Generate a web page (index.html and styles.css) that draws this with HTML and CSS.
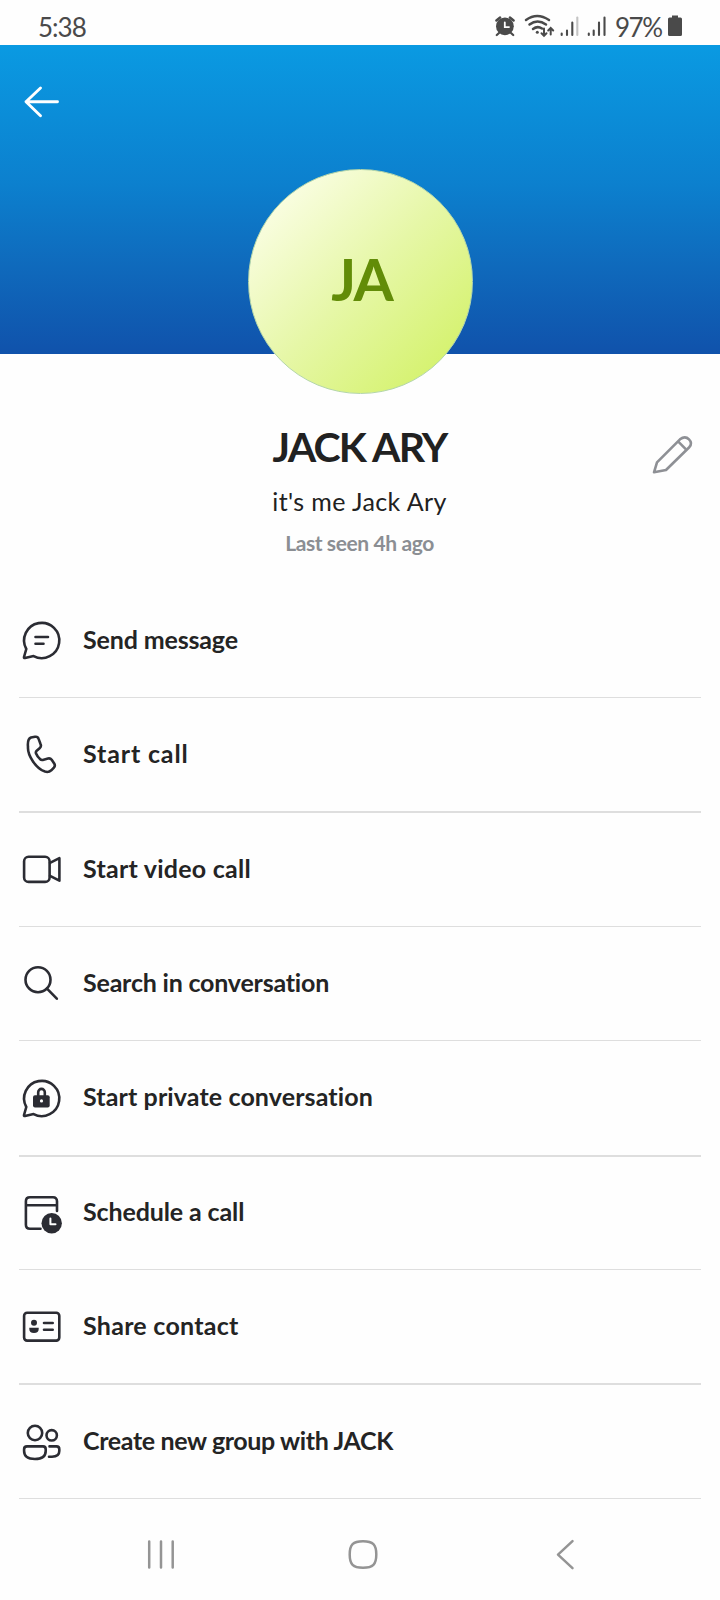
FILE: index.html
```html
<!DOCTYPE html>
<html lang="en">
<head>
<meta charset="utf-8">
<title>Contact profile</title>
<link rel="stylesheet" href="styles.css">
</head>
<body>
<div class="screen">
  <header class="status">
    <span class="status-time">5:38</span>
    <div class="status-right">
      <svg class="status-icons" width="112" height="26" viewBox="494 14 112 26">
        <g fill="#4a4a4a" stroke="#4a4a4a" stroke-linecap="round">
          <circle cx="504.9" cy="26.3" r="8.9" stroke="none"/>
          <path d="M499 33l-2.2 2M511 33l2.2 2" stroke-width="2.2"/>
          <path d="M496.4 20.5l3.7-3M513.6 20.5l-3.7-3" stroke-width="2.4"/>
          <path d="M504.8 22.3v4.8h4.2" fill="none" stroke="#fff" stroke-width="1.8"/>
          <path d="M526 20Q537 12 549 20M529.500 24.500Q537.500 18.500 546 24.500M533 29Q537.500 25.500 542 28.500" fill="none" stroke-width="2.5"/>
          <circle cx="537.3" cy="32.3" r="1.5" stroke="none"/>
          <path d="M544 28.500v7M541.500 33.300l2.500 2.500 2.500-2.500M550.700 34.500v-6.500M548.200 30.500l2.500-2.500 2.500 2.500" fill="none" stroke-width="2"/>
          <path d="M561.700 33.500v1.500M567 30.500v4.500M572.300 22.500v12.500M588.800 33.500v1.500M593.700 30.500v4.500M599 22.500v12.500M604.500 17.500v17.500" stroke-width="2.1"/>
          <path d="M577.300 17.500v17.500" stroke="#c4c4c4" stroke-width="2.100"/>
        </g>
      </svg>
      <span class="status-battery">97%</span>
      <svg class="battery" width="14" height="22" viewBox="0 0 14 22"><path d="M4 .500h6v2h2.500q1.500 0 1.500 1.500v15.500q0 1.500-1.500 1.500h-11q-1.500 0-1.500-1.500v-15.500q0-1.500 1.500-1.500h2.500z" fill="#4a4a4a"/></svg>
    </div>
  </header>

  <section class="banner">
    <svg class="back" width="36" height="34" viewBox="0 0 36 34"><path d="M33.500 16.800H2M16.500 3L2 16.800l14.500 14" fill="none" stroke="#fff" stroke-width="2.900" stroke-linecap="round" stroke-linejoin="round"/></svg>
    <div class="avatar"><span class="initials">JA</span></div>
  </section>

  <section class="profile">
    <div class="identity">
      <h1 class="name">JACK ARY</h1>
      <p class="mood">it's me Jack Ary</p>
      <p class="seen">Last seen 4h ago</p>
    </div>
    <svg class="edit" width="40" height="40" viewBox="0 0 40 40"><g fill="none" stroke="#8e9095" stroke-width="2.600" stroke-linejoin="round"><path d="M2 38.300L5 28.300 28 5.300Q33 1.300 37 5.300T37 13.500L14 36Z"/><path d="M26.300 7.700l7.700 7.700"/></g></svg>
  </section>

  <main class="actions">
    <div class="action"><svg class="icon" viewBox="0 0 40 41"><path d="M5.300 29A17.600 17.600 0 1 1 12.600 36.100L4 38Q2.700 38.200 3 37Z"/><path d="M14.500 17H27M14.500 23.700H22.500"/></svg><span class="label send">Send message</span></div>
    <div class="action thick"><svg class="icon" viewBox="0 0 40 41"><path d="M10 3.500L14 2.800Q16.800 2.300 17.600 4.900L19.600 10.200Q20.600 12.600 18.600 14.300L15.700 16.800Q14.300 18 15.200 19.800Q16.500 23 19 25Q20.200 26.300 21.800 25.900L27 24.500Q29.300 23.900 30.700 25.800L33.200 29.500Q34.600 31.600 32.900 33.600L30.300 36.300Q27.700 38.700 24 37.600Q17.500 35.500 12 27.500T7 13Q6.200 5 10 3.500Z"/></svg><span class="label call">Start call</span></div>
    <div class="action"><svg class="icon" viewBox="0 0 40 41"><rect x="3.100" y="7.800" width="25.500" height="25.100" rx="4.500"/><path d="M29 13.800L38.400 9.200V31.700L29 26.800"/></svg><span class="label video">Start video call</span></div>
    <div class="action"><svg class="icon" viewBox="0 0 40 41"><circle cx="17" cy="16.700" r="12.500"/><path d="M26 25.700L35.800 35.700"/></svg><span class="label search">Search in conversation</span></div>
    <div class="action thick"><svg class="icon" viewBox="0 0 40 41"><path d="M5.300 29A17.600 17.600 0 1 1 12.600 36.100L4 38Q2.700 38.200 3 37Z"/><rect class="solid" x="12" y="17.200" width="16.700" height="12.200" rx="2"/><path d="M17.200 18V14.200a3.300 3.300 0 0 1 6.600 0V18"/><circle class="hole" cx="20.500" cy="22.900" r="1.600"/></svg><span class="label private">Start private conversation</span></div>
    <div class="action"><svg class="icon" viewBox="0 0 40 41"><path d="M36 18V8.300Q36 4.300 32 4.300H9Q4.900 4.300 4.900 8.300V31.700Q4.900 35.700 9 35.700H19.500M4.900 12.200H36"/><circle class="solid" cx="30.700" cy="30.200" r="10.200"/><path class="hand" d="M29.400 25.500V31.300H34.500"/></svg><span class="label schedule">Schedule a call</span></div>
    <div class="action thick"><svg class="icon" viewBox="0 0 40 41"><rect x="3.100" y="6.800" width="35.200" height="27.800" rx="3"/><circle class="solid" cx="13" cy="16.700" r="3"/><path class="solid" d="M8.300 21.700h9.400v1.300q0 4-4.700 4t-4.700-4z"/><path d="M23 17H31.700M23 23.700H31.700"/></svg><span class="label share">Share contact</span></div>
    <div class="action"><svg class="icon" viewBox="0 0 40 41"><circle cx="14" cy="12" r="7.200"/><circle cx="30.700" cy="14.300" r="5.200"/><path d="M6 25.400H22Q24.700 25.400 24.700 28.200V30Q24.700 38 13.900 38T3.100 30V28.200Q3.100 25.400 6 25.400ZM28.500 25.400H35.500Q38.300 25.400 38.300 28.200V30Q38.300 35.700 31 35.700H28"/></svg><span class="label group">Create new group with JACK</span></div>
  </main>

  <nav class="navbar">
    <svg width="32" height="32" viewBox="0 0 32 32"><path d="M4.200 3.500V29.500M16 3.500V29.500M27.700 3.500V29.500"/></svg>
    <svg width="32" height="32" viewBox="0 0 32 32"><path d="M16 3.200C26 3.200 29.300 6.500 29.300 16.500S26 29.800 16 29.800 2.700 26.500 2.700 16.500 6 3.200 16 3.200Z"/></svg>
    <svg width="32" height="32" viewBox="0 0 32 32"><path d="M23.500 3.200L9 16.700 23.500 30.200"/></svg>
  </nav>
</div>
</body>
</html>
```
FILE: styles.css
```css
* { box-sizing: border-box; }
body { margin: 0; background: #fefefe; font-family: Lato, "Open Sans", sans-serif; font-variant-ligatures: none; }
svg { display: block; flex: none; overflow: visible; }
.screen { width: 720px; height: 1600px; display: flex; flex-direction: column; overflow: hidden; }

.status { height: 45px; padding: 8px 38px 0; display: flex; justify-content: space-between; align-items: center; color: #4a4a4a; font-size: 26px; line-height: 36px; }
.status-time { letter-spacing: -1px; }
.status-right { display: flex; align-items: center; }
.status-icons { margin-top: 1px; }
.status-battery { width: 48px; margin: 0 5px 0 9px; white-space: nowrap; letter-spacing: -1.500px; }
.battery { margin-top: -2px; }

.banner { height: 309px; flex: none; display: grid; grid-template-columns: 1fr 225px 1fr; background: linear-gradient(#0a9ae2, #0c80ce 45%, #0f6bbd 70%, #1052ab); }
.back { margin: 40px 0 0 24px; }
.avatar { width: 225px; height: 225px; margin-top: 124px; border-radius: 50%; border: 1.500px solid #b4d6aa; background: linear-gradient(135deg, #fbfee6 10%, #e6f7a7 50%, #d4f26b 90%); display: flex; align-items: center; justify-content: center; }
.initials { padding: 0 0 6px 3px; color: #628c08; font-size: 58px; font-weight: 700; line-height: 60px; letter-spacing: -2px; }

.profile { height: 230px; flex: none; padding: 68px 28px 0 27px; display: grid; grid-template-columns: 40px 1fr 40px; }
.identity { grid-column: 2; text-align: center; color: #212121; }
.name { margin: 0; font-size: 41px; font-weight: 700; line-height: 50px; letter-spacing: -1.800px; }
.mood { margin: 13px 0 0; font-size: 25px; line-height: 32px; letter-spacing: 0.400px; }
.seen { margin: 12px 0 0; font-size: 21px; font-weight: 700; line-height: 28px; letter-spacing: -0.400px; color: #8b8e93; }
.edit { margin-top: 12px; }

.actions { flex: none; margin: 0 19px; display: grid; grid-template-rows: 114px 115px 114px 114px 116px 113px 115px 114px; }
.action { display: flex; align-items: center; gap: 22px; padding-left: 2px; border-bottom: 1px solid #dedede; font-size: 25px; font-weight: 700; color: #242424; white-space: nowrap; }
.action.thick { border-bottom-width: 2px; }
.label { padding-bottom: 4px; }
.send { letter-spacing: -0.150px; }
.call { letter-spacing: 0.850px; }
.video { letter-spacing: 0.250px; }
.search { letter-spacing: -0.200px; }
.private { letter-spacing: 0.120px; }
.schedule { letter-spacing: -0.120px; }
.share { letter-spacing: 0.270px; }
.group { letter-spacing: -0.360px; }
.icon { width: 40px; height: 41px; fill: none; stroke: #2b2c33; stroke-width: 2.600; stroke-linecap: round; stroke-linejoin: round; }
.icon .solid { fill: #2b2c33; stroke: none; }
.icon .hole { fill: #fff; stroke: none; }
.icon .hand { stroke: #fff; stroke-width: 2; }

.navbar { flex: 1; padding: 39px 139px 0 145px; display: flex; justify-content: space-between; align-items: flex-start; }
.navbar svg { fill: none; stroke: #949494; stroke-width: 2.500; stroke-linecap: round; stroke-linejoin: round; }
```
